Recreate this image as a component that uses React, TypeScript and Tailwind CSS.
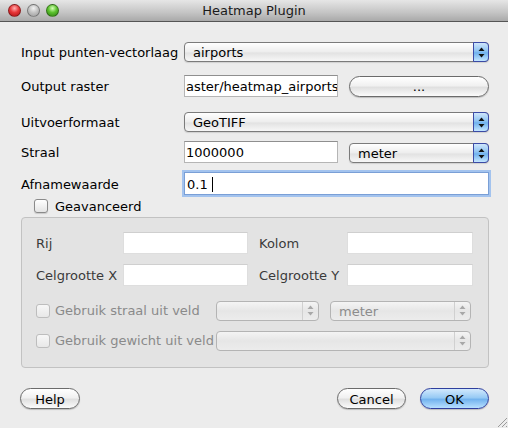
import React from "react";

const font = { fontFamily: '"DejaVu Sans", "Lucida Grande", sans-serif' };

function Arrows({ disabled }: { disabled?: boolean }) {
  const c = disabled ? "#a8a8a8" : "#111";
  return (
    <svg width="7" height="11" viewBox="0 0 7 11">
      <polygon points="3.5,0.5 6.5,4 0.5,4" fill={c} />
      <polygon points="3.5,10.5 6.5,7 0.5,7" fill={c} />
    </svg>
  );
}

function Combo({ text, w, disabled }: { text?: string; w: number; disabled?: boolean }) {
  return (
    <div
      className={
        "relative flex h-[20px] items-center rounded-[4px] border " +
        (disabled
          ? "border-[#b4b4b4] bg-[linear-gradient(#f4f4f4,#e6e6e6_50%,#ececec)] text-[#8c8c8c]"
          : "border-[#7b7b7b] bg-[linear-gradient(#ffffff,#ededed_50%,#e2e2e2_55%,#f7f7f7)] text-black shadow-[0_1px_1px_rgba(0,0,0,0.12)]")
      }
      style={{ width: w }}
    >
      <span className="pl-[8px] pt-[1px] text-[13px] leading-none">{text}</span>
      {disabled ? (
        <div className="absolute right-0 top-0 flex h-full w-[16px] items-center justify-center border-l border-[#d0d0d0]">
          <Arrows disabled />
        </div>
      ) : (
        <div className="absolute right-[-1px] top-[-1px] flex h-[20px] w-[16px] items-center justify-center rounded-r-[4px] border border-[#3b4aa6] bg-[linear-gradient(#cfe6fb,#8ec3f2_45%,#6fb1ee_55%,#c4e6ff)]">
          <Arrows />
        </div>
      )}
    </div>
  );
}

function Field({ text, w, h = 22, disabled }: { text?: string; w: number; h?: number; disabled?: boolean }) {
  return (
    <div
      className={
        "flex items-center overflow-hidden border bg-white text-[13px] leading-none text-black " +
        (disabled ? "border-[#dedede] border-t-[#cfcfcf]" : "border-[#b5b5b5] border-t-[#8f8f8f]")
      }
      style={{ width: w, height: h }}
    >
      <span className="whitespace-nowrap pl-[1px] pt-[1px]">{text}</span>
    </div>
  );
}

function PushButton({ label, w, def }: { label: string; w: number; def?: boolean }) {
  return (
    <div
      className={
        "flex h-[21px] items-center justify-center rounded-full border pt-[1px] text-[13px] leading-none text-black " +
        (def
          ? "border-[#2f3f9e] bg-[linear-gradient(#d2e9fd,#98cbf5_45%,#73b3ee_55%,#b8e0ff)] shadow-[0_1px_1px_rgba(0,0,0,0.2)]"
          : "border-[#6b6b6b] bg-[linear-gradient(#ffffff,#f1f1f1_45%,#e0e0e0_55%,#fbfbfb)] shadow-[0_1px_1px_rgba(0,0,0,0.2)]")
      }
      style={{ width: w }}
    >
      {label}
    </div>
  );
}

function Check({ disabled }: { disabled?: boolean }) {
  return (
    <div
      className={
        "h-[14px] w-[14px] shrink-0 rounded-[3px] border " +
        (disabled
          ? "border-[#bdbdbd] bg-[linear-gradient(#f7f7f7,#e8e8e8)]"
          : "border-[#8a8a8a] bg-[linear-gradient(#ffffff,#e4e4e4)] shadow-[0_1px_1px_rgba(0,0,0,0.15)]")
      }
    />
  );
}

function Light({ bg }: { bg: string }) {
  return <div className={"h-[13px] w-[13px] rounded-full border border-[rgba(0,0,0,0.35)] " + bg} />;
}

export default function App() {
  return (
    <div className="relative h-[428px] w-[508px] overflow-hidden bg-[#ececec] text-[13px] text-black" style={font}>
      {/* title bar */}
      <div className="relative flex h-[22px] items-center border-b border-[#555] bg-[linear-gradient(#e6e6e6,#c4c4c4_60%,#a9a9a9)]">
        <div className="flex items-center gap-[6px] pl-[8px]">
          <Light bg="bg-[radial-gradient(circle_at_50%_30%,#ffb0b0,#e8383a_45%,#a81012)]" />
          <Light bg="bg-[radial-gradient(circle_at_50%_30%,#f2f2f2,#c4c4c4_45%,#9a9a9a)]" />
          <Light bg="bg-[radial-gradient(circle_at_50%_30%,#d6ffb8,#5cc22e_45%,#2e7d12)]" />
        </div>
        <div className="absolute inset-0 flex items-center justify-center pt-[1px] text-[13px] text-[#1a1a1a]">Heatmap Plugin</div>
      </div>

      <div className="flex flex-col pl-[21px]">
        {/* row 1 */}
        <div className="mt-[20px] flex h-[20px] items-center">
          <div className="w-[163px] pt-[2px]">Input punten-vectorlaag</div>
          <Combo text="airports" w={305} />
        </div>
        {/* row 2 */}
        <div className="mt-[13px] flex h-[22px] items-center">
          <div className="w-[163px] pt-[2px]">Output raster</div>
          <Field text="aster/heatmap_airports" w={154} />
          <div className="ml-[11px]">
            <PushButton label="..." w={140} />
          </div>
        </div>
        {/* row 3 */}
        <div className="mt-[15px] flex h-[20px] items-center">
          <div className="w-[163px] pt-[2px]">Uitvoerformaat</div>
          <Combo text="GeoTIFF" w={305} />
        </div>
        {/* row 4 */}
        <div className="mt-[9px] flex h-[22px] items-center">
          <div className="w-[163px] pt-[2px]">Straal</div>
          <Field text="1000000" w={154} />
          <div className="ml-[11px] mt-[2px]">
            <Combo text="meter" w={140} />
          </div>
        </div>
        {/* row 5 */}
        <div className="mt-[9px] flex h-[23px] items-center">
          <div className="w-[163px] pt-[2px]">Afnamewaarde</div>
          <div className="flex h-[23px] w-[305px] items-center border border-[#7a9fd6] bg-white pt-[1px] text-[13px] leading-none shadow-[0_0_0_2px_#a3c3ee]">
            <span className="pl-[2px]">0.1</span>
            <span className="ml-[4px] h-[15px] w-[1px] bg-black" />
          </div>
        </div>
        {/* checkbox */}
        <div className="mt-[4px] flex h-[14px] items-center pl-[13px]">
          <Check />
          <span className="ml-[7px] pt-[1px]">Geavanceerd</span>
        </div>
        {/* group */}
        <div className="mt-[4px] h-[151px] w-[468px] rounded-[4px] border border-[#c2c2c2] bg-[#e3e3e3] pl-[14px] text-[#3a3a3a]">
          <div className="mt-[14px] flex h-[22px] items-center">
            <div className="w-[87px] pt-[1px]">Rij</div>
            <Field w={125} disabled />
            <div className="ml-[11px] w-[88px] pt-[1px]">Kolom</div>
            <Field w={126} disabled />
          </div>
          <div className="mt-[10px] flex h-[22px] items-center">
            <div className="w-[87px] pt-[1px]">Celgrootte X</div>
            <Field w={125} disabled />
            <div className="ml-[11px] w-[88px] pt-[1px]">Celgrootte Y</div>
            <Field w={126} disabled />
          </div>
          <div className="mt-[14px] flex h-[21px] items-center text-[#8a8a8a]">
            <Check disabled />
            <span className="ml-[5px] w-[161px] pt-[1px]">Gebruik straal uit veld</span>
            <Combo w={103} disabled />
            <div className="ml-[11px]">
              <Combo text="meter" w={141} disabled />
            </div>
          </div>
          <div className="mt-[9px] flex h-[21px] items-center text-[#8a8a8a]">
            <Check disabled />
            <span className="ml-[5px] w-[161px] whitespace-nowrap pt-[1px]">Gebruik gewicht uit veld</span>
            <Combo w={255} disabled />
          </div>
        </div>
        {/* buttons */}
        <div className="mt-[20px] flex h-[21px] items-center pr-[19px]">
          <div className="-ml-[1px]">
            <PushButton label="Help" w={60} />
          </div>
          <div className="ml-auto flex gap-[14px]">
            <PushButton label="Cancel" w={69} />
            <PushButton label="OK" w={69} def />
          </div>
        </div>
      </div>

      {/* resize grip */}
      <svg className="absolute bottom-0 right-0" width="12" height="12" viewBox="0 0 12 12">
        <line x1="11" y1="2" x2="2" y2="11" stroke="#9a9a9a" strokeWidth="1" />
        <line x1="11" y1="6" x2="6" y2="11" stroke="#9a9a9a" strokeWidth="1" />
        <line x1="11" y1="10" x2="10" y2="11" stroke="#9a9a9a" strokeWidth="1" />
      </svg>
    </div>
  );
}
